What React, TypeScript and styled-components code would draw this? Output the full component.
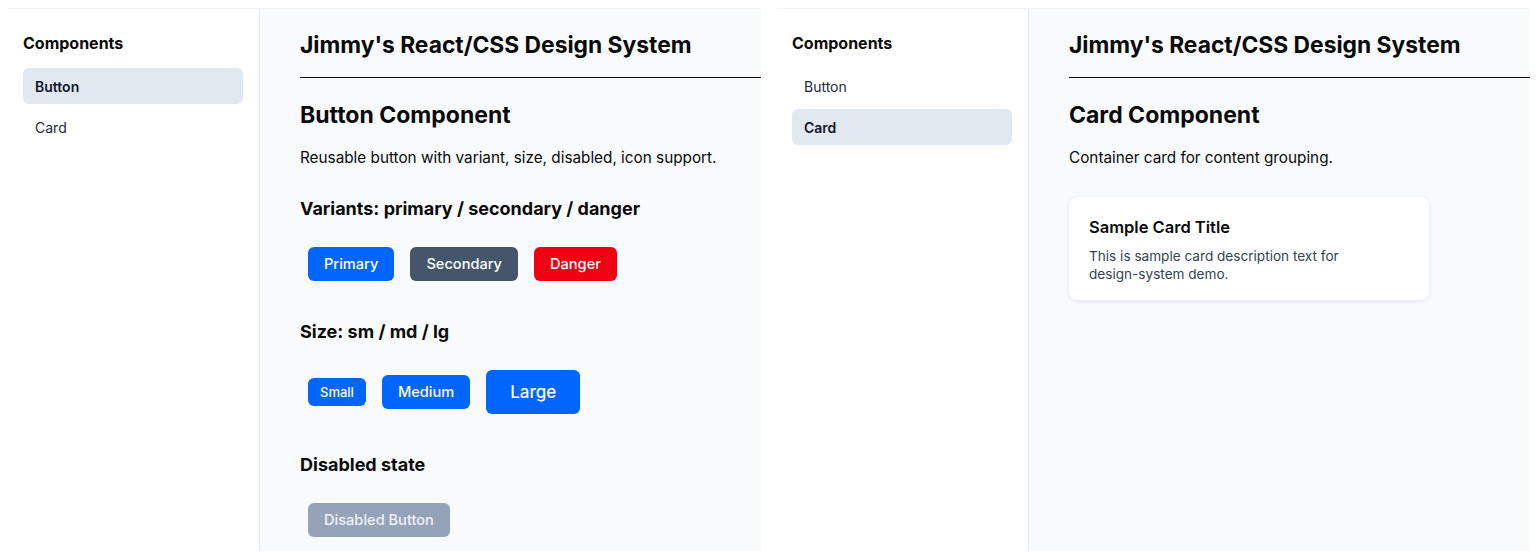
import React from 'react';
import styled, { createGlobalStyle, css } from 'styled-components';

const GlobalStyle = createGlobalStyle`
    body {
        margin: 8px;
        background: #ffffff;
        font-family: Inter, "Noto Sans", "Liberation Sans", sans-serif;
        color: #0a0a0a;
    }
`;

type PageKey = 'button' | 'card';
type Variant = 'primary' | 'secondary' | 'danger';
type Size = 'sm' | 'md' | 'lg';

const Shell = styled.div`
    display: flex;
    gap: 16px;
`;

const Frame = styled.div`
    display: flex;
    width: 753px;
    height: 543px;
    overflow: hidden;
    border-top: 1px solid #f2f3f5;
    box-sizing: border-box;
`;

const Sidebar = styled.aside`
    width: 252px;
    flex-shrink: 0;
    box-sizing: border-box;
    padding: 24px 16px 16px 15px;
    background: #ffffff;
    border-right: 1px solid #e2e8f0;
`;

const SidebarTitle = styled.h4`
    margin: 0 0 15px;
    font-size: 16px;
    line-height: 20px;
    font-weight: 700;
`;

const NavList = styled.nav`
    display: flex;
    flex-direction: column;
    gap: 5px;
`;

const NavItem = styled.div<{ $active?: boolean }>`
    height: 36px;
    display: flex;
    align-items: center;
    padding: 0 12px;
    border-radius: 6px;
    font-size: 14px;
    color: #1e293b;
    font-weight: 400;
    ${props => props.$active && css`
        background: #e2e8f0;
        color: #0f172a;
        font-weight: 600;
    `}
`;

const Main = styled.main`
    flex: 1;
    min-width: 0;
    padding: 21px 0 0 40px;
    background: #f8fafc;
`;

const SiteTitle = styled.h1`
    margin: 0 0 23px;
    padding-bottom: 17px;
    border-bottom: 1px solid #111111;
    font-size: 22.8px;
    line-height: 30px;
    font-weight: 700;
    white-space: nowrap;
`;

const PageTitle = styled.h2`
    margin: 0 0 17px;
    font-size: 23px;
    line-height: 28px;
    font-weight: 700;
`;

const Lead = styled.p`
    margin: 0 0 27px;
    font-size: 15.3px;
    line-height: 24px;
`;

const Section = styled.section`
    margin-bottom: 31px;
`;

const SectionTitle = styled.h3`
    margin: 0 0 18px;
    font-size: 18px;
    line-height: 24px;
    font-weight: 700;
`;

const ButtonRow = styled.div`
    display: flex;
    align-items: center;
`;

const variantColors: Record<Variant, string> = {
    primary: '#0066ff',
    secondary: '#45556c',
    danger: '#f00012',
};

const sizeStyles: Record<Size, ReturnType<typeof css>> = {
    sm: css`
        padding: 6px 12px;
        font-size: 13px;
        line-height: 16px;
    `,
    md: css`
        padding: 8px 16px;
        font-size: 14.6px;
        line-height: 18px;
    `,
    lg: css`
        padding: 12px 24px;
        font-size: 17px;
        line-height: 20px;
    `,
};

const Btn = styled.button<{ $variant: Variant; $size: Size }>`
    margin: 8px;
    border: none;
    border-radius: 6px;
    font-family: inherit;
    font-weight: 500;
    color: #ffffff;
    background: ${props => variantColors[props.$variant]};
    cursor: pointer;
    ${props => sizeStyles[props.$size]}

    &:disabled {
        background: #94a3b8;
        color: #eef2f6;
        cursor: not-allowed;
    }
`;

const Card = styled.div`
    width: 360px;
    box-sizing: border-box;
    padding: 19px 20px 17px;
    background: #ffffff;
    border-radius: 8px;
    box-shadow: 0 1px 4px rgba(15, 23, 42, 0.1);
`;

const CardTitle = styled.div`
    margin-bottom: 8px;
    font-size: 16.5px;
    line-height: 23px;
    font-weight: 600;
`;

const CardText = styled.p`
    margin: 0;
    font-size: 13.6px;
    line-height: 18px;
    color: #334155;
    max-width: 280px;
`;

const ButtonPage = () => (
    <>
        <PageTitle>Button Component</PageTitle>
        <Lead>Reusable button with variant, size, disabled, icon support.</Lead>
        <Section>
            <SectionTitle>Variants: primary / secondary / danger</SectionTitle>
            <ButtonRow>
                <Btn $variant="primary" $size="md">Primary</Btn>
                <Btn $variant="secondary" $size="md">Secondary</Btn>
                <Btn $variant="danger" $size="md">Danger</Btn>
            </ButtonRow>
        </Section>
        <Section>
            <SectionTitle>Size: sm / md / lg</SectionTitle>
            <ButtonRow>
                <Btn $variant="primary" $size="sm">Small</Btn>
                <Btn $variant="primary" $size="md">Medium</Btn>
                <Btn $variant="primary" $size="lg">Large</Btn>
            </ButtonRow>
        </Section>
        <Section>
            <SectionTitle>Disabled state</SectionTitle>
            <ButtonRow>
                <Btn $variant="primary" $size="md" disabled>Disabled Button</Btn>
            </ButtonRow>
        </Section>
    </>
);

const CardPage = () => (
    <>
        <PageTitle>Card Component</PageTitle>
        <Lead>Container card for content grouping.</Lead>
        <Card>
            <CardTitle>Sample Card Title</CardTitle>
            <CardText>This is sample card description text for design-system demo.</CardText>
        </Card>
    </>
);

const navItems: { key: PageKey; label: string }[] = [
    { key: 'button', label: 'Button' },
    { key: 'card', label: 'Card' },
];

const DesignSystem: React.FC<{ page: PageKey }> = ({ page }) => (
    <Frame>
        <Sidebar>
            <SidebarTitle>Components</SidebarTitle>
            <NavList>
                {navItems.map(item => (
                    <NavItem key={item.key} $active={item.key === page}>{item.label}</NavItem>
                ))}
            </NavList>
        </Sidebar>
        <Main>
            <SiteTitle>Jimmy's React/CSS Design System</SiteTitle>
            {page === 'button' ? <ButtonPage /> : <CardPage />}
        </Main>
    </Frame>
);

export default function App() {
    return (
        <>
            <GlobalStyle />
            <Shell>
                <DesignSystem page="button" />
                <DesignSystem page="card" />
            </Shell>
        </>
    );
}
